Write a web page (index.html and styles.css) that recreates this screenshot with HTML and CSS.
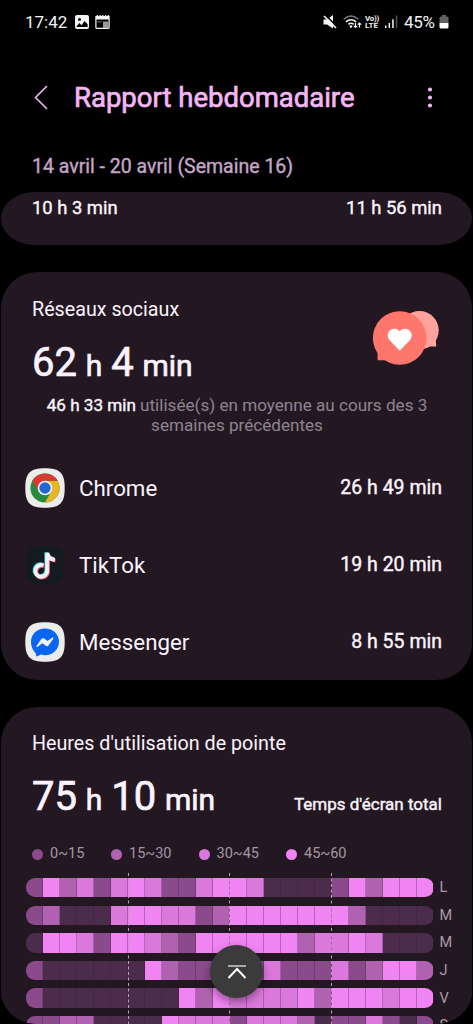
FILE: index.html
```html
<!DOCTYPE html>
<html lang="fr">
<head>
<meta charset="utf-8">
<title>Rapport hebdomadaire</title>
<link rel="stylesheet" href="styles.css">
</head>
<body>
<div class="screen">
  <div class="status">
    <div class="status-left">
      <span class="clock">17:42</span>
      <svg width="14" height="14" viewBox="0 0 14 14"><path fill="#f4f4f4" fill-rule="evenodd" d="M2 0h10a2 2 0 0 1 2 2v10a2 2 0 0 1-2 2H2a2 2 0 0 1-2-2V2a2 2 0 0 1 2-2zM1.500 11.500L4.300 8l2.200 2.200L9.600 6l3 3.200V12H1.500zM4.500 3a1.500 1.500 0 1 0 .01 0z"/></svg>
      <svg class="calendar" width="15" height="14" viewBox="0 0 15 14"><path fill="#f4f4f4" d="M.3 1h1.400V0H3v1h1.500V0h1.300v1h1.400V0h1.300v1H10V0h1.300v1h1.400V0H14v1h.7v3.600H.3z"/><path fill="none" stroke="#f4f4f4" stroke-width="1.200" d="M.9 4v8.400q0 1 1 1h11.200q1 0 1-1V4"/><path fill="#999" d="M2 6.400h5v.8H2zM8 6.400h5.500v6.500H8z"/></svg>
    </div>
    <div class="status-right">
      <svg width="14" height="14" viewBox="0 0 14 14"><path fill="#f4f4f4" d="M.5 4.500h3.500L10 0v13.500L4 9.500H.5z"/><path stroke="#000" stroke-width="1.500" d="M2.500 0L14 11.500"/><path stroke="#f4f4f4" stroke-width="1.600" d="M1 1l12 12"/></svg>
      <svg class="wifi" width="19" height="14" viewBox="0 0 19 14" fill="none"><path stroke="#777" stroke-width="1.500" d="M.7 4.200Q8 -2.300 15.300 4.200"/><path stroke="#f4f4f4" stroke-width="1.500" d="M2.900 6.900Q8 2.500 13.100 6.900M5.400 9.400Q8 7.200 10.600 9.400"/><circle cx="8" cy="11.500" r="1.300" fill="#f4f4f4"/><path stroke="#f4f4f4" stroke-width="1.200" d="M12.500 8v4.500m-1.700-1.700l1.700 1.700 1.700-1.700M16.500 12.500V8m-1.700 1.700L16.500 8l1.700 1.700"/></svg>
      <span class="volte"><span class="vo">Vo))</span><span>LTE</span></span>
      <svg class="signal" width="13" height="13" viewBox="0 0 13 13"><path fill="#f4f4f4" d="M0 10.500h1.500V13H0zM3.600 8h1.500v5H3.600zM7.200 4.300h1.500V13H7.200z"/><path fill="#555" d="M10.800.5h1.500V13h-1.500z"/></svg>
      <span class="percent">45%</span>
      <svg width="10" height="14" viewBox="0 0 10 14"><path fill="#626262" d="M3 0h4v1.500h1.200Q9.500 1.500 9.500 3v5h-9V3Q.5 1.500 1.800 1.500H3z"/><path fill="#fff" d="M.5 8h9v4q0 1.500-1.500 1.500H2Q.5 13.500.5 12z"/></svg>
    </div>
  </div>

  <header class="header">
    <svg class="back" width="14" height="26" viewBox="0 0 14 26"><path fill="none" stroke="#f0b3f2" stroke-width="1.700" stroke-linecap="round" stroke-linejoin="round" d="M12.500 1.500L1.500 12.500l11 11"/></svg>
    <h1>Rapport hebdomadaire</h1>
    <svg class="more" width="6" height="22" viewBox="0 0 6 22" fill="#f0b3f2"><circle cx="3" cy="2.500" r="2.100"/><circle cx="3" cy="10.500" r="2.100"/><circle cx="3" cy="18.500" r="2.100"/></svg>
  </header>

  <div class="week">14 avril - 20 avril (Semaine 16)</div>

  <main class="scroller">
    <section class="summary"><span>10 h 3 min</span><span>11 h 56 min</span></section>

    <section class="card social">
      <div class="social-head">
        <div>
          <h2>Réseaux sociaux</h2>
          <div class="total">62 <small>h</small> 4 <small>min</small></div>
        </div>
        <svg class="hearts" width="66" height="54" viewBox="0 0 66 54"><circle cx="46.500" cy="19.300" r="19.200" fill="#ffa39c"/><path fill="#ffa39c" d="M50 35.500h13.200L62.700 27z"/><circle cx="26.700" cy="27" r="26.800" fill="#ff766c"/><path fill="#ff766c" d="M4.600 36v13.200H17z"/><path fill="#fff" d="M26.700 39.700L16.800 29.500C11.500 23 17.500 16 23.500 18q2 .7 3.200 2.500 1.200-1.800 3.200-2.500C36 16 42 23 36.600 29.500z"/></svg>
      </div>
      <p class="average"><b>46 h 33 min</b> utilisée(s) en moyenne au cours des 3 semaines précédentes</p>
      <ul class="apps">
        <li>
          <svg width="40" height="40" viewBox="0 0 40 40"><path fill="#ececec" d="M20 .3C35 .3 39.700 5 39.700 20S35 39.700 20 39.700.3 35 .3 20 5 .3 20 .3z"/><circle cx="20" cy="20" r="14.600" fill="#248b41"/><path fill="#e9b522" d="M20 20V12.700h12.700A14.600 14.600 0 0 1 20 34.600L26.300 23.600z"/><path fill="#d83a30" d="M7.360 12.700A14.600 14.600 0 0 1 32.640 12.700H20L13.700 23.600z"/><circle cx="20" cy="20" r="7.300" fill="#f4f4f4"/><circle cx="20" cy="20" r="5.700" fill="#2167d2"/></svg>
          <span class="name">Chrome</span><span class="time">26 h 49 min</span>
        </li>
        <li>
          <svg width="40" height="40" viewBox="0 0 40 40"><path fill="#131a20" d="M20 .5C35 .5 39.500 5 39.500 20S35 39.500 20 39.500.5 35 .5 20 5 .5 20 .5z"/><g fill="none" stroke-width="4"><path id="note" stroke="#35d7cf" d="M17.600 19.600a5.900 5.900 0 1 0 3.800 5.500V7.200q.8 6.300 7.400 6.800"/><path stroke="#f03a5f" d="M19.200 21.200a5.900 5.900 0 1 0 3.800 5.500V8.800q.8 6.300 7.600 6.800"/><path stroke="#f7f2f7" d="M18.400 20.400a5.900 5.900 0 1 0 3.800 5.500V8q.8 6.300 7.600 6.800"/></g></svg>
          <span class="name">TikTok</span><span class="time">19 h 20 min</span>
        </li>
        <li>
          <svg width="40" height="40" viewBox="0 0 40 40"><path fill="#ececec" d="M20 .3C35 .3 39.700 5 39.700 20S35 39.700 20 39.700.3 35 .3 20 5 .3 20 .3z"/><path fill="#0866f2" d="M20 6.500c8 0 14 5.700 14 13.300s-6 13.400-14 13.400q-2 0-4-.6l-4.200 1.800q-.8 0-.9-2.900C7.800 28.700 6 24.500 6 19.800 6 12.200 12 6.500 20 6.500z"/><path fill="#f5f5f5" d="M11.500 24l4.800-7q1.300-1.500 3-.4l3.200 2.500 5-3.500q1.400-.3.900 1l-4.700 6.700q-1.300 1.500-3 .4L17.300 21.300l-5 3.600q-1.300.2-.8-.9z"/></svg>
          <span class="name">Messenger</span><span class="time">8 h 55 min</span>
        </li>
      </ul>
    </section>

    <section class="card peak">
      <h2>Heures d'utilisation de pointe</h2>
      <div class="peak-head">
        <div class="total">75 <small>h</small> 10 <small>min</small></div>
        <div class="caption">Temps d'écran total</div>
      </div>
      <div class="legend">
        <span><i class="l1"></i>0~15</span><span><i class="l2"></i>15~30</span><span><i class="l3"></i>30~45</span><span><i class="l4"></i>45~60</span>
      </div>
      <div class="chart" id="chart">
        <svg class="guides" width="407" height="152"><path fill="none" stroke="#b89dbb" stroke-dasharray="3 2.500" d="M102.500 0v152M203.500 0v152M305.500 0v152"/></svg>
      </div>
    </section>
  </main>
  <button class="to-top" aria-label="Haut de page"><svg width="20" height="16" viewBox="0 0 20 16" fill="none"><path stroke="#aaa" stroke-width="2" d="M1 2h18"/><path stroke="#fff" stroke-width="2" d="M1.500 14L10 5l8.500 9"/></svg></button>
</div>
<script src="chart.js"></script>
</body>
</html>
```

FILE: styles.css
```css
* { box-sizing: border-box; }
body { margin: 0; background: #000; font-family: Roboto, "Noto Sans", sans-serif; color: #fbf3fd; }
h1, h2, p, ul { margin: 0; padding: 0; font-weight: 400; }
svg { display: block; flex: none; }
.screen { position: relative; width: 473px; height: 1024px; overflow: hidden; display: flex; flex-direction: column; }

.status { height: 43px; flex: none; display: flex; justify-content: space-between; padding: 0 24px 0 25px; color: #f2f2f2; }
.status-left, .status-right { display: flex; align-items: center; }
.clock, .percent { font-size: 17px; }
.clock { width: 50px; }
.calendar { margin-left: 6px; }
.wifi { margin-left: 6px; }
.volte { display: flex; flex-direction: column; width: 14px; margin-left: 3px; font-size: 8px; line-height: 7px; font-weight: 700; }
.vo { letter-spacing: -.3px; }
.signal { margin-left: 6px; }
.percent { margin: 0 3px 0 6px; width: 32px; letter-spacing: -.3px; }

.header { height: 109px; flex: none; display: flex; align-items: center; padding: 0 40px 0 34px; }
.header h1 { margin-left: 26px; flex: 1; font-size: 27.500px; color: #f4b6f5; -webkit-text-stroke: .7px #f4b6f5; white-space: nowrap; }
.week { height: 40px; flex: none; padding-left: 32px; font-size: 19.500px; line-height: 30px; color: #c4a5c7; -webkit-text-stroke: .4px #c4a5c7; }

.scroller { flex: 1; min-height: 0; overflow: hidden; border-radius: 0 0 36px 36px; display: flex; flex-direction: column; }
.summary, .card { flex: none; background: #231822; margin: 0 1px; }
.summary { height: 53px; border-radius: 34px / 26.500px; display: flex; justify-content: space-between; padding: 5px 30px 0 31px; font-size: 18.400px; line-height: 21px; -webkit-text-stroke: .4px; }
.card { border-radius: 36px; padding: 0 30px 0 31px; }
.card h2 { font-size: 19.700px; line-height: 24px; }
.total { font-size: 40px; line-height: 48px; -webkit-text-stroke: .7px; white-space: pre; word-spacing: -1.100px; }
.total small { font-size: 30px; }

.social { margin-top: 27px; height: 408px; padding-top: 26px; }
.social-head { display: flex; justify-content: space-between; }
.social-head .total { margin-top: 17px; }
.hearts { margin: 13px 3px 0 0; }
.average { margin-top: 5px; text-align: center; font-size: 17.100px; line-height: 20px; color: #8f848f; }
.average b { font-weight: 400; color: #fbf3fd; -webkit-text-stroke: .4px; }
.apps { list-style: none; margin: 14px 0 0 -7px; }
.apps li { height: 77.300px; display: flex; align-items: center; }
.name { margin-left: 14px; flex: 1; font-size: 22.300px; }
.time { font-size: 19.500px; line-height: 24px; -webkit-text-stroke: .4px; }

.peak { margin-top: 27px; height: 360px; padding-top: 25px; }
.peak-head { display: flex; justify-content: space-between; margin-top: 17px; }
.caption { font-size: 17px; line-height: 62px; height: 48px; -webkit-text-stroke: .4px; }
.legend { display: flex; margin-top: 21px; height: 18px; font-size: 14.500px; line-height: 18px; color: #a396a3; }
.legend span { display: flex; align-items: center; width: 87.500px; }
.legend span:first-child { width: 79px; }
.legend i { width: 11px; height: 11px; border-radius: 50%; margin-right: 7px; }
.chart { position: relative; margin: 15px 0 0 -6px; display: flex; flex-direction: column; gap: 8.200px; }
.day { display: flex; align-items: center; gap: 6px; height: 19.400px; font-size: 14.500px; line-height: 18px; color: #a99ca9; }
.day span { padding-top: 1px; }
.hours { flex: none; width: 407.500px; height: 19.400px; display: grid; grid-template-columns: repeat(24, 1fr); border-radius: 9px; overflow: hidden; }
.hours i { border-right: 1px solid rgba(60, 20, 65, .3); }
.hours i:last-child { border: 0; }
.guides { position: absolute; left: 0; top: -5px; }
.l0 { background: #4b2c4a; }
.l1 { background: #8b4a8b; }
.l2 { background: #b062b1; }
.l3 { background: #da78dc; }
.l4 { background: #f084f2; }
.to-top { position: absolute; left: 210px; top: 945px; width: 53px; height: 53px; padding: 0; border: 0; border-radius: 50%; background: #3b3b3b; display: grid; place-items: center; box-shadow: 0 4px 9px rgba(0, 0, 0, .38); }
```

FILE: chart.js
```javascript
// Usage level (0-4) for each of the 24 hours, one row per day.
const days = [
  ['L', '142313431134430000142444'],
  ['M', '120003443312444444420000'],
  ['M', '044314432144444423343000'],
  ['J', '100000042111113111312442'],
  ['V', '100000000424333342444344'],
  ['S', '112200004333133320113101']
];
const chart = document.getElementById('chart');
const guides = chart.querySelector('.guides');
for (const [label, levels] of days) {
  const row = document.createElement('div');
  row.className = 'day';
  const hours = document.createElement('div');
  hours.className = 'hours';
  for (const level of levels) {
    const cell = document.createElement('i');
    cell.className = 'l' + level;
    hours.append(cell);
  }
  const name = document.createElement('span');
  name.textContent = label;
  row.append(hours, name);
  chart.insertBefore(row, guides);
}
```
